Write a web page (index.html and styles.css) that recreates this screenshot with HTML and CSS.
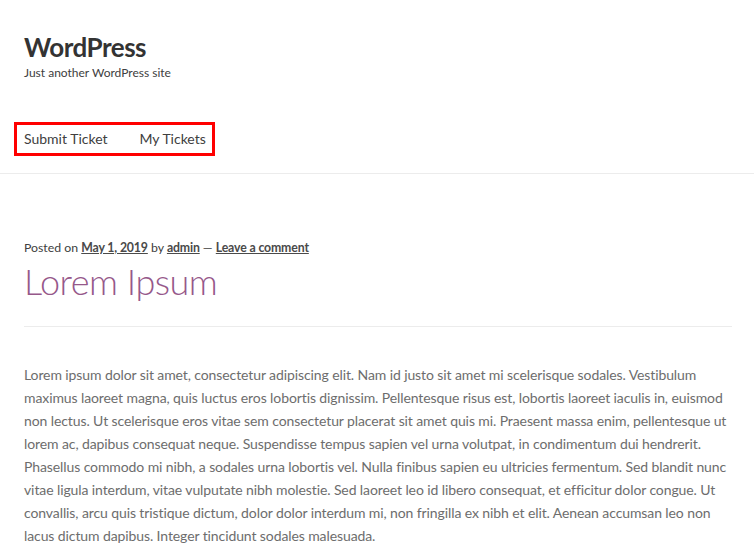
FILE: index.html
```html
<!DOCTYPE html>
<html lang="en">
<head>
  <meta charset="UTF-8" />
  <title>WordPress – Just another WordPress site</title>
  <link rel="stylesheet" href="styles.css">
</head>
<body>
  <header class="site-header">
    <div class="branding">
      <div class="site-title">WordPress</div>
      <p class="site-description">Just another WordPress site</p>
    </div>
    <nav class="main-nav">
      <a href="#">Submit Ticket</a>
      <a href="#">My Tickets</a>
    </nav>
  </header>

  <main class="content">
    <article class="post">
      <div class="post-meta">
        Posted on <a href="#">May 1, 2019</a> by <a href="#">admin</a> — <a href="#">Leave a comment</a>
      </div>
      <h1 class="entry-title">Lorem Ipsum</h1>
      <div class="entry-content">
        <p>Lorem ipsum dolor sit amet, consectetur adipiscing elit. Nam id justo sit amet mi scelerisque sodales. Vestibulum maximus laoreet magna, quis luctus eros lobortis dignissim. Pellentesque risus est, lobortis laoreet iaculis in, euismod non lectus. Ut scelerisque eros vitae sem consectetur placerat sit amet quis mi. Praesent massa enim, pellentesque ut lorem ac, dapibus consequat neque. Suspendisse tempus sapien vel urna volutpat, in condimentum dui hendrerit. Phasellus commodo mi nibh, a sodales urna lobortis vel. Nulla finibus sapien eu ultricies fermentum. Sed blandit nunc vitae ligula interdum, vitae vulputate nibh molestie. Sed laoreet leo id libero consequat, et efficitur dolor congue. Ut convallis, arcu quis tristique dictum, dolor dolor interdum mi, non fringilla ex nibh et elit. Aenean accumsan leo non lacus dictum dapibus. Integer tincidunt sodales malesuada.</p>
      </div>
    </article>
  </main>
</body>
</html>
```

FILE: styles.css
```css
body {
  margin: 0;
  font-family: Lato, 'Open Sans', sans-serif;
  font-size: 14px;
  line-height: 1.618;
  color: #6d6d6d;
  background-color: #ffffff;
}
a {
  color: #333333;
}

/* Header */
.site-header {
  border-bottom: 1px solid #ececec;
  padding: 0 24px;
}
.branding {
  padding-top: 32px;
}
.site-title {
  font-size: 26px;
  font-weight: bold;
  line-height: 1.2;
  color: #333333;
  letter-spacing: -0.5px;
}
.site-description {
  margin: 1px 0 0;
  font-size: 12px;
  line-height: 1.5;
  color: #404040;
}
.main-nav {
  display: inline-flex;
  gap: 32px;
  margin: 40px 0 17px -10px;
  padding: 4px 6px 4px 7px;
  border: 3px solid #ff0000;
  line-height: 20px;
}
.main-nav a {
  color: #404040;
  text-decoration: none;
}

/* Content */
.content {
  padding: 64px 22px 0 24px;
}
.post-meta {
  font-size: 12.3px;
  color: #404040;
  line-height: 20px;
}
.post-meta a {
  color: #4a4a4a;
  font-weight: bold;
  letter-spacing: -0.15px;
}
.entry-title {
  margin: 0;
  padding: 0 0 21px;
  font-size: 36px;
  font-weight: 300;
  line-height: 1.3;
  color: #96588a;
  letter-spacing: -0.5px;
  border-bottom: 1px solid #ececec;
}
.entry-content p {
  margin: 36px 0 0;
  line-height: 23px;
  letter-spacing: -0.1px;
}
```
